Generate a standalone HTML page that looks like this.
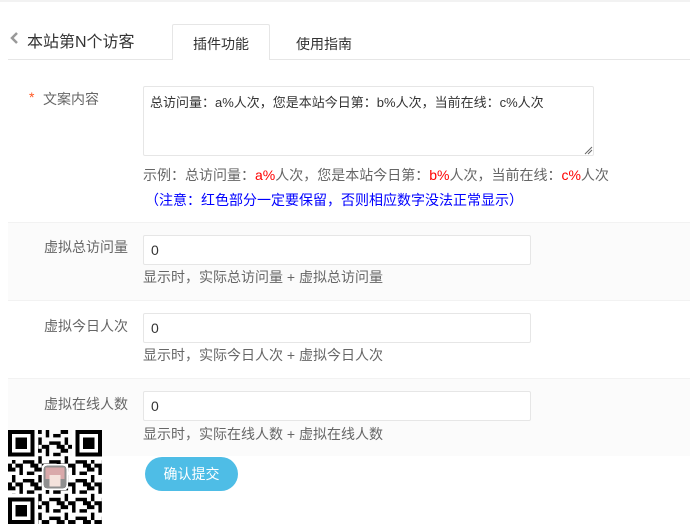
<!DOCTYPE html>
<html><head><meta charset="utf-8">
<style>
*{margin:0;padding:0;box-sizing:border-box}
body{width:690px;height:530px;background:#fff;font-family:"Liberation Sans","Noto Sans CJK SC",sans-serif;font-size:14px;color:#666;position:relative;overflow:hidden}
.abs{position:absolute;white-space:nowrap}
.topline{position:absolute;left:0;top:0;width:690px;height:2px;background:#f2f2f2}
.tabline{position:absolute;left:8px;top:59px;width:682px;height:1px;background:#e6e6e6}
.tab{position:absolute;left:172px;top:24px;width:98px;height:36px;border:1px solid #e6e6e6;border-bottom:none;background:#fff;border-radius:2px 2px 0 0;text-align:center;line-height:38px;font-size:14px;color:#333}
.row{position:absolute;left:8px;width:682px;height:78px;background:#fbfbfb;border-top:1px solid #f2f2f2}
.input{position:absolute;left:143px;width:388px;height:30px;border:1px solid #e6e6e6;border-radius:2px;background:#fff;padding-left:7px;line-height:29px;font-size:14px;color:#333}
.red{color:#f00}
.lbl{position:absolute;white-space:nowrap;right:562px;text-align:right}
</style></head><body>
<div class="topline"></div>
<svg class="abs" style="left:10px;top:32px" width="10" height="12"><path d="M7 1L2 6L7 11" stroke="#999" stroke-width="2.5" fill="none"/></svg>
<div class="abs" style="left:27px;top:28px;font-size:16px;color:#333">本站第N个访客</div>
<div class="tabline"></div>
<div class="tab">插件功能</div>
<div class="abs" style="left:296px;top:34px;color:#333">使用指南</div>

<div class="abs" style="left:29px;top:89px;color:#ff5722">*</div>
<div class="abs" style="left:43px;top:89px">文案内容</div>
<div style="position:absolute;left:143px;top:86px;width:451px;height:70px;border:1px solid #e6e6e6;border-radius:2px"></div>
<div class="abs" style="left:150px;top:92px;color:#333;font-size:13px">总访问量：a%人次，您是本站今日第：b%人次，当前在线：c%人次</div>
<svg class="abs" style="left:583px;top:145px" width="10" height="10"><path d="M2 9L9 2M5 9L9 5" stroke="#666" stroke-width="1"/></svg>
<div class="abs" style="left:143px;top:165px">示例：总访问量：<span class="red">a%</span>人次，您是本站今日第：<span class="red">b%</span>人次，当前在线：<span class="red">c%</span>人次</div>
<div class="abs" style="left:145px;top:190px;color:#00f">（注意：红色部分一定要保留，否则相应数字没法正常显示）</div>

<div class="row" style="top:222px"></div>
<div class="lbl" style="top:237px">虚拟总访问量</div>
<div class="input" style="top:235px">0</div>
<div class="abs" style="left:143px;top:267px">显示时，实际总访问量 + 虚拟总访问量</div>

<div class="row" style="top:300px;background:#fff"></div>
<div class="lbl" style="top:316px">虚拟今日人次</div>
<div class="input" style="top:313px">0</div>
<div class="abs" style="left:143px;top:345px">显示时，实际今日人次 + 虚拟今日人次</div>

<div class="row" style="top:378px;height:78px"></div>
<div class="lbl" style="top:394px">虚拟在线人数</div>
<div class="input" style="top:391px">0</div>
<div class="abs" style="left:143px;top:424px">显示时，实际在线人数 + 虚拟在线人数</div>

<div class="abs" style="left:145px;top:457px;width:93px;height:34px;border-radius:17px;background:#4ebde6;color:#fff;text-align:center;line-height:34px;font-size:14px">确认提交</div>

<svg class="abs" style="left:8px;top:430px" width="94" height="94" viewBox="0 0 25 25" shape-rendering="crispEdges">
<defs><pattern id="p" width="7" height="5" patternUnits="userSpaceOnUse">
<rect x="0" y="0" width="2" height="1"/><rect x="3" y="0" width="1" height="2"/><rect x="5" y="1" width="2" height="1"/><rect x="1" y="2" width="1" height="2"/><rect x="4" y="3" width="2" height="1"/><rect x="6" y="3" width="1" height="2"/><rect x="2" y="4" width="2" height="1"/><rect x="0" y="4" width="1" height="1"/>
</pattern></defs>
<rect width="25" height="25" fill="url(#p)"/>
<g fill="#fff"><rect x="0" y="0" width="8" height="8"/><rect x="17" y="0" width="8" height="8"/><rect x="0" y="17" width="8" height="8"/></g>
<g fill="none" stroke="#000"><rect x="0.5" y="0.5" width="6" height="6"/><rect x="18.5" y="0.5" width="6" height="6"/><rect x="0.5" y="18.5" width="6" height="6"/></g>
<rect x="2" y="2" width="3" height="3"/><rect x="20" y="2" width="3" height="3"/><rect x="2" y="20" width="3" height="3"/>
<rect x="9" y="9" width="7" height="7" rx="1" fill="#fff"/>
<rect x="9.5" y="9.5" width="6" height="6" rx="0.8" fill="#8f8f8f"/>
<rect x="10" y="10" width="5" height="3" fill="#d9a9aa"/>
<rect x="11" y="12" width="3" height="3" fill="#f4e2dc"/>
</svg>
</body></html>
